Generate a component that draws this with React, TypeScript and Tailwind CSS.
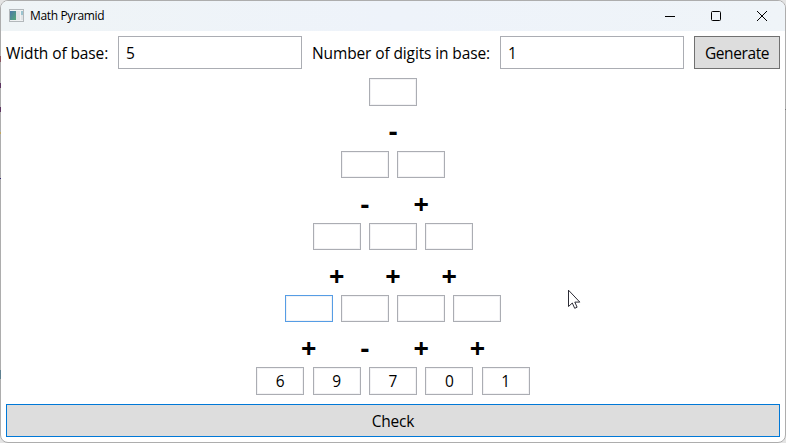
import React from "react";

type Level = { cells: string[]; ops: string[]; height: string; gap: string; opsPad: string; focused?: number };

const levels: Level[] = [
  { cells: [""], ops: ["-"], height: "h-7", gap: "gap-2", opsPad: "pt-[4px]" },
  { cells: ["", ""], ops: ["-", "+"], height: "h-[27px]", gap: "gap-2", opsPad: "pt-[5px]" },
  { cells: ["", "", ""], ops: ["+", "+", "+"], height: "h-[27px]", gap: "gap-2", opsPad: "pt-[5px]" },
  { cells: ["", "", "", ""], ops: ["+", "-", "+", "+"], height: "h-[27px]", gap: "gap-2", opsPad: "pt-[5px]", focused: 0 },
  { cells: ["6", "9", "7", "0", "1"], ops: [], height: "h-7", gap: "gap-[8.4px]", opsPad: "" },
];

// Slivers of the desktop that show beside the window frame.
const slivers = [
  "left-0 top-[56px] h-[6px] bg-[#8a5560]",
  "left-0 top-[83px] h-[5px] bg-[#5d3560]",
  "left-0 top-[107px] h-[5px] bg-[#5d3560]",
  "left-0 top-[132px] h-[2px] bg-[#c0a860]",
  "left-0 top-[178px] h-px bg-[#352a75]",
  "left-0 top-[370px] h-[9px] bg-[#5f8190]",
  "right-0 top-[109px] h-px bg-[#777777]",
];

function AppIcon() {
  return (
    <svg width="16" height="14" viewBox="0 0 16 14" shapeRendering="crispEdges">
      <defs>
        <linearGradient id="pane" x1="0" y1="0" x2="1" y2="1">
          <stop offset="0" stopColor="#4a77a8" />
          <stop offset="1" stopColor="#55a878" />
        </linearGradient>
      </defs>
      <rect x="1" y="0" width="15" height="13" fill="#b3b8bb" />
      <rect x="2" y="1" width="13" height="11" fill="#f0f2f3" />
      <rect x="2" y="2" width="6" height="9" fill="url(#pane)" />
      <rect x="8" y="2" width="4" height="9" fill="#dfe3e5" />
      <rect x="13" y="2" width="2" height="4" fill="#9bc4cf" />
      <rect x="13" y="6" width="2" height="5" fill="#e0e4e6" />
    </svg>
  );
}

function TitleBar() {
  return (
    <header className="flex h-[30px] shrink-0 items-center bg-linear-to-r from-[#eff4f6] via-[#eef3fa] to-[#eff4f8] pl-[7px]">
      <AppIcon />
      <span className="ml-[6px] flex-1 text-[12px] leading-[30px] tracking-[-0.36px]">Math Pyramid</span>
      <div className="flex h-full items-center gap-[34px] pr-[17px]">
        <svg width="12" height="12" viewBox="0 0 12 12" fill="none" stroke="black">
          <path d="M1 6.5h10" />
        </svg>
        <svg width="12" height="12" viewBox="0 0 12 12" fill="none" stroke="black">
          <rect x="1.5" y="1.5" width="9" height="9" rx="1" />
        </svg>
        <svg width="12" height="12" viewBox="0 0 12 12" fill="none" stroke="black">
          <path d="M1 1l10 10M11 1L1 11" />
        </svg>
      </div>
    </header>
  );
}

export default function App() {
  return (
    <div className="relative h-[443px] w-[786px] overflow-hidden bg-[#e4e4e4] font-['Open_Sans','Noto_Sans',sans-serif] text-black">
      <div className="flex h-full flex-col overflow-hidden rounded-lg border border-[#adadad] bg-white">
        <TitleBar />
        <main className="flex flex-1 flex-col px-[5px] pt-[5px]">
          <div className="flex h-[33px] shrink-0 items-center text-[15.5px] leading-5">
            <label className="w-[112px] whitespace-nowrap pt-px tracking-[-0.1px]">Width of base:</label>
            <div className="flex h-full w-[184px] items-center border border-[#abadb3] pl-[7px] pt-px">5</div>
            <label className="ml-[10px] w-[188px] whitespace-nowrap pt-px tracking-[-0.12px]">Number of digits in base:</label>
            <div className="flex h-full w-[184px] items-center border border-[#abadb3] pl-[7px] pt-px">1</div>
            <button className="ml-[10px] h-full w-[86px] border border-[#707070] bg-[#dddddd] pt-px tracking-[-0.4px]">Generate</button>
          </div>
          <div className="flex flex-1 flex-col items-center pt-[9px]">
            {levels.map((level, i) => (
              <React.Fragment key={i}>
                <div className={`flex shrink-0 ${level.gap}`}>
                  {level.cells.map((value, j) => (
                    <div
                      key={j}
                      className={`flex w-12 items-center justify-center border text-[15.5px] leading-5 shadow-[inset_0_0_0_1px_#f3f3f5] ${level.height} ${
                        level.focused === j ? "border-[#569de5]" : "border-[#abadb3]"
                      }`}
                    >
                      {value}
                    </div>
                  ))}
                </div>
                {level.ops.length > 0 && (
                  <div className={`flex h-[45px] shrink-0 items-start ${level.opsPad}`}>
                    {level.ops.map((op, j) => (
                      <span key={j} className="w-[56.25px] text-center text-[27px] font-bold leading-[41px]">
                        {op}
                      </span>
                    ))}
                  </div>
                )}
              </React.Fragment>
            ))}
          </div>
          <button className="mb-[5px] h-[33px] w-full shrink-0 border border-[#0078d7] bg-[#dddddd] pt-px text-[15.5px] leading-5 tracking-[-0.2px]">
            Check
          </button>
        </main>
      </div>
      {slivers.map((place) => (
        <i key={place} className={`absolute w-px ${place}`} />
      ))}
      <svg className="absolute left-[568px] top-[289px]" width="13" height="21" viewBox="0 0 13 21">
        <path
          d="M0.5 1.2v16.3l3.8-3.5 2.4 5.3 2.4-1.1-2.3-5.1h5z"
          fill="white"
          stroke="#14141f"
          strokeWidth="0.9"
        />
      </svg>
    </div>
  );
}
